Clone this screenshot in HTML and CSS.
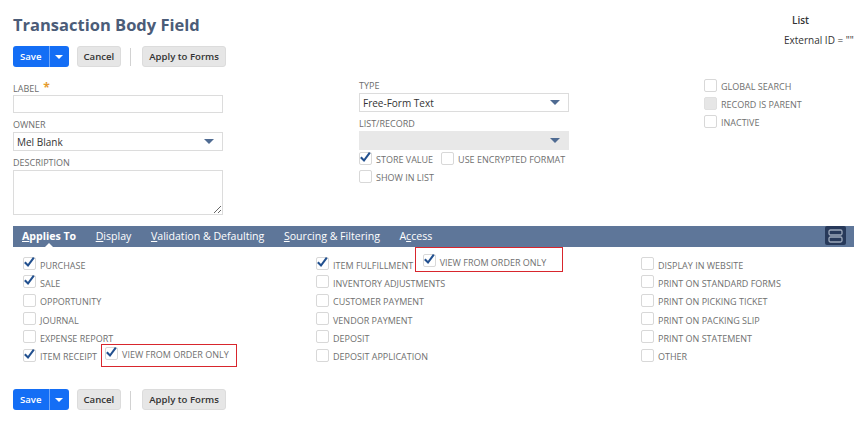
FILE: index.html
```html
<!DOCTYPE html>
<html>
<head>
<meta charset="utf-8">
<title>Transaction Body Field</title>
<link rel="stylesheet" href="styles.css">
</head>
<body>
<div class="page">
  <header class="head">
    <div class="head-main">
      <h1 class="title">Transaction Body Field</h1>
      <div class="actions">
        <div class="split">
          <button class="btn-save">Save</button>
          <button class="btn-drop"><svg width="8" height="4" viewBox="0 0 8 4"><path d="M0 0h8L4 4z" fill="#fff"/></svg></button>
        </div>
        <button class="btn">Cancel</button>
        <span class="sep"></span>
        <button class="btn btn-after-sep">Apply to Forms</button>
      </div>
    </div>
    <div class="head-side">
      <div class="side-list">List</div>
      <div class="side-ext">External ID = ""</div>
    </div>
  </header>

  <section class="form">
    <div class="col col-a">
      <div class="field">
        <div class="flabel">LABEL <span class="req">*</span></div>
        <div class="inp"></div>
      </div>
      <div class="field">
        <div class="flabel">OWNER</div>
        <div class="inp sel"><span>Mel Blank</span><svg class="caret" viewBox="0 0 10 5"><path d="M0 0h10L5 5z"/></svg></div>
      </div>
      <div class="field">
        <div class="flabel">DESCRIPTION</div>
        <textarea class="ta"></textarea>
      </div>
    </div>

    <div class="col col-b">
      <div class="field">
        <div class="flabel">TYPE</div>
        <div class="inp sel"><span>Free-Form Text</span><svg class="caret" viewBox="0 0 10 5"><path d="M0 0h10L5 5z"/></svg></div>
      </div>
      <div class="field">
        <div class="flabel">LIST/RECORD</div>
        <div class="inp sel sel-off"><span></span><svg class="caret" viewBox="0 0 10 5"><path d="M0 0h10L5 5z"/></svg></div>
      </div>
      <div class="checks-b">
        <div class="chk">
          <svg class="cb" viewBox="0 0 13 13"><rect x=".5" y=".5" width="12" height="12" rx="1.5"/><path d="M1.8 5.2L5 8.5L10.8 .6"/></svg>
          <span class="chk-label">STORE VALUE</span>
          <svg class="cb cb-next" viewBox="0 0 13 13"><rect x=".5" y=".5" width="12" height="12" rx="1.5"/></svg>
          <span class="chk-label">USE ENCRYPTED FORMAT</span>
        </div>
        <div class="chk">
          <svg class="cb" viewBox="0 0 13 13"><rect x=".5" y=".5" width="12" height="12" rx="1.5"/></svg>
          <span class="chk-label">SHOW IN LIST</span>
        </div>
      </div>
    </div>

    <div class="col col-c">
      <div class="chk">
        <svg class="cb" viewBox="0 0 13 13"><rect x=".5" y=".5" width="12" height="12" rx="1.5"/></svg>
        <span class="chk-label">GLOBAL SEARCH</span>
      </div>
      <div class="chk">
        <svg class="cb cb-off" viewBox="0 0 13 13"><rect x=".5" y=".5" width="12" height="12" rx="1.5"/></svg>
        <span class="chk-label">RECORD IS PARENT</span>
      </div>
      <div class="chk">
        <svg class="cb" viewBox="0 0 13 13"><rect x=".5" y=".5" width="12" height="12" rx="1.5"/></svg>
        <span class="chk-label">INACTIVE</span>
      </div>
    </div>
  </section>

  <nav class="tabs">
    <span class="tab active"><u>A</u>pplies To</span>
    <span class="tab"><u>D</u>isplay</span>
    <span class="tab"><u>V</u>alidation &amp; Defaulting</span>
    <span class="tab"><u>S</u>ourcing &amp; Filtering</span>
    <span class="tab">A<u>c</u>cess</span>
    <span class="tab-icon"><svg width="15" height="14" viewBox="0 0 15 14"><rect x="1" y="1" width="13" height="5" rx="1.5"/><rect x="1" y="8" width="13" height="5" rx="1.5"/></svg></span>
  </nav>

  <section class="applies">
    <div class="acol">
      <div class="chk">
        <svg class="cb" viewBox="0 0 13 13"><rect x=".5" y=".5" width="12" height="12" rx="1.5"/><path d="M1.8 5.2L5 8.5L10.8 .6"/></svg>
        <span class="chk-label">PURCHASE</span>
      </div>
      <div class="chk">
        <svg class="cb" viewBox="0 0 13 13"><rect x=".5" y=".5" width="12" height="12" rx="1.5"/><path d="M1.8 5.2L5 8.5L10.8 .6"/></svg>
        <span class="chk-label">SALE</span>
      </div>
      <div class="chk">
        <svg class="cb" viewBox="0 0 13 13"><rect x=".5" y=".5" width="12" height="12" rx="1.5"/></svg>
        <span class="chk-label">OPPORTUNITY</span>
      </div>
      <div class="chk">
        <svg class="cb" viewBox="0 0 13 13"><rect x=".5" y=".5" width="12" height="12" rx="1.5"/></svg>
        <span class="chk-label">JOURNAL</span>
      </div>
      <div class="chk">
        <svg class="cb" viewBox="0 0 13 13"><rect x=".5" y=".5" width="12" height="12" rx="1.5"/></svg>
        <span class="chk-label">EXPENSE REPORT</span>
      </div>
      <div class="chk">
        <svg class="cb" viewBox="0 0 13 13"><rect x=".5" y=".5" width="12" height="12" rx="1.5"/><path d="M1.8 5.2L5 8.5L10.8 .6"/></svg>
        <span class="chk-label">ITEM RECEIPT</span>
        <span class="note note-a">
          <svg class="cb" viewBox="0 0 13 13"><rect x=".5" y=".5" width="12" height="12" rx="1.5"/><path d="M1.8 5.2L5 8.5L10.8 .6"/></svg>
          <span class="chk-label">VIEW FROM ORDER ONLY</span>
        </span>
      </div>
    </div>

    <div class="acol">
      <div class="chk">
        <svg class="cb" viewBox="0 0 13 13"><rect x=".5" y=".5" width="12" height="12" rx="1.5"/><path d="M1.8 5.2L5 8.5L10.8 .6"/></svg>
        <span class="chk-label">ITEM FULFILLMENT</span>
        <span class="note note-b">
          <svg class="cb" viewBox="0 0 13 13"><rect x=".5" y=".5" width="12" height="12" rx="1.5"/><path d="M1.8 5.2L5 8.5L10.8 .6"/></svg>
          <span class="chk-label">VIEW FROM ORDER ONLY</span>
        </span>
      </div>
      <div class="chk">
        <svg class="cb" viewBox="0 0 13 13"><rect x=".5" y=".5" width="12" height="12" rx="1.5"/></svg>
        <span class="chk-label">INVENTORY ADJUSTMENTS</span>
      </div>
      <div class="chk">
        <svg class="cb" viewBox="0 0 13 13"><rect x=".5" y=".5" width="12" height="12" rx="1.5"/></svg>
        <span class="chk-label">CUSTOMER PAYMENT</span>
      </div>
      <div class="chk">
        <svg class="cb" viewBox="0 0 13 13"><rect x=".5" y=".5" width="12" height="12" rx="1.5"/></svg>
        <span class="chk-label">VENDOR PAYMENT</span>
      </div>
      <div class="chk">
        <svg class="cb" viewBox="0 0 13 13"><rect x=".5" y=".5" width="12" height="12" rx="1.5"/></svg>
        <span class="chk-label">DEPOSIT</span>
      </div>
      <div class="chk">
        <svg class="cb" viewBox="0 0 13 13"><rect x=".5" y=".5" width="12" height="12" rx="1.5"/></svg>
        <span class="chk-label">DEPOSIT APPLICATION</span>
      </div>
    </div>

    <div class="acol">
      <div class="chk">
        <svg class="cb" viewBox="0 0 13 13"><rect x=".5" y=".5" width="12" height="12" rx="1.5"/></svg>
        <span class="chk-label">DISPLAY IN WEBSITE</span>
      </div>
      <div class="chk">
        <svg class="cb" viewBox="0 0 13 13"><rect x=".5" y=".5" width="12" height="12" rx="1.5"/></svg>
        <span class="chk-label">PRINT ON STANDARD FORMS</span>
      </div>
      <div class="chk">
        <svg class="cb" viewBox="0 0 13 13"><rect x=".5" y=".5" width="12" height="12" rx="1.5"/></svg>
        <span class="chk-label">PRINT ON PICKING TICKET</span>
      </div>
      <div class="chk">
        <svg class="cb" viewBox="0 0 13 13"><rect x=".5" y=".5" width="12" height="12" rx="1.5"/></svg>
        <span class="chk-label">PRINT ON PACKING SLIP</span>
      </div>
      <div class="chk">
        <svg class="cb" viewBox="0 0 13 13"><rect x=".5" y=".5" width="12" height="12" rx="1.5"/></svg>
        <span class="chk-label">PRINT ON STATEMENT</span>
      </div>
      <div class="chk">
        <svg class="cb" viewBox="0 0 13 13"><rect x=".5" y=".5" width="12" height="12" rx="1.5"/></svg>
        <span class="chk-label">OTHER</span>
      </div>
    </div>
  </section>

  <div class="actions actions-bottom">
    <div class="split">
      <button class="btn-save">Save</button>
      <button class="btn-drop"><svg width="8" height="4" viewBox="0 0 8 4"><path d="M0 0h8L4 4z" fill="#fff"/></svg></button>
    </div>
    <button class="btn">Cancel</button>
    <span class="sep"></span>
    <button class="btn btn-after-sep">Apply to Forms</button>
  </div>
</div>
</body>
</html>
```

FILE: styles.css
```css
* { box-sizing: border-box; }

html, body {
  margin: 0;
  overflow: hidden;
  background: #fff;
}

body {
  font-family: "Open Sans", "Liberation Sans", sans-serif;
  color: #333;
}

.page {
  width: 854px;
  padding-left: 13px;
}

/* header */
.head {
  display: flex;
  align-items: flex-start;
}

.head-main { flex: 1; }

.title {
  margin: 13px 0 0;
  font-size: 16.5px;
  line-height: 24px;
  font-weight: 700;
  color: #4b5c78;
}

.head-side {
  width: 70px;
  margin-top: 10px;
  font-size: 10px;
  line-height: 20px;
  white-space: nowrap;
  color: #333;
}

.side-list {
  padding-left: 8px;
  font-weight: 600;
}

/* buttons */
.actions {
  display: flex;
  align-items: center;
  height: 21px;
  margin-top: 9px;
}

.split {
  display: flex;
  height: 21px;
  border-radius: 3px;
  background: #146ef5;
  overflow: hidden;
}

.btn-save,
.btn-drop,
.btn {
  font-family: inherit;
  margin: 0;
  cursor: pointer;
}

.btn-save {
  border: 0;
  border-right: 1px solid rgba(255, 255, 255, 0.4);
  background: transparent;
  color: #fff;
  font-size: 9.6px;
  font-weight: 600;
  padding: 0 7px;
  height: 21px;
}

.btn-drop {
  border: 0;
  background: transparent;
  width: 19px;
  height: 21px;
  padding: 0;
  display: flex;
  align-items: center;
  justify-content: center;
}

.btn {
  height: 21px;
  margin-left: 8px;
  padding: 0 6px;
  border: 1px solid #dcdcdc;
  border-radius: 3px;
  background: #e6e6e6;
  color: #333;
  font-size: 9.6px;
  font-weight: 600;
}

.btn-after-sep { margin-left: 0; }

.sep {
  width: 1px;
  height: 18px;
  background: #d2d2d2;
  margin: 0 11px 0 9px;
}

.actions-bottom {
  margin-top: 23px;
}

.actions-bottom .sep {
  height: 22px;
  margin-top: 4px;
}

/* form */
.form {
  display: grid;
  grid-template-columns: 346px 345px 1fr;
  margin-top: 11px;
}

.col-a { padding-top: 3px; }
.col-b { padding-top: 1px; }

.field + .field { margin-top: 5px; }

.flabel {
  height: 14px;
  font-size: 9px;
  line-height: 14px;
  color: #6d6d6d;
}

.req {
  color: #e59b2e;
  font-size: 12px;
  font-weight: 700;
  margin-left: 2px;
}

.inp {
  width: 210px;
  height: 18px;
  display: flex;
  align-items: center;
  padding: 0 3px;
  border: 1px solid #dcdcdc;
  background: #fff;
  font-size: 10px;
  color: #333;
}

.sel { height: 19px; }

.sel-off {
  background: #e8e8e8;
  border-color: #e8e8e8;
}

.caret {
  width: 10px;
  height: 5px;
  margin-left: auto;
  margin-right: 5px;
  fill: #4f6b92;
}

.ta {
  display: block;
  width: 210px;
  height: 45px;
  margin: 0;
  border: 1px solid #dcdcdc;
  font-family: inherit;
  resize: vertical;
}

.checks-b { margin-top: 1px; }

/* checkboxes */
.chk {
  display: flex;
  align-items: center;
  height: 18px;
}

.cb {
  width: 13px;
  height: 13px;
  flex: none;
  overflow: visible;
  margin-bottom: 4px;
}

.cb rect {
  fill: #fff;
  stroke: #d8d8d8;
}

.cb path {
  fill: none;
  stroke: #22508f;
  stroke-width: 2.1;
  stroke-linejoin: miter;
}

.cb-off rect {
  fill: #e6e6e6;
  stroke: #e0e0e0;
}

.cb-next { margin-left: 8px; }

.chk-label {
  margin-left: 4px;
  font-size: 9px;
  line-height: 14px;
  color: #707070;
  white-space: nowrap;
}

/* tabs */
.tabs {
  display: flex;
  align-items: center;
  height: 21px;
  margin-top: 11px;
  padding-left: 9px;
  background: #5e7699;
  color: #fff;
  font-size: 10.6px;
}

.tab {
  position: relative;
  margin-right: 19.5px;
  line-height: 21px;
  white-space: nowrap;
}

.tab u { text-underline-offset: 1px; }

.tab.active { font-weight: 700; }

.tab.active::after {
  content: "";
  position: absolute;
  left: 50%;
  bottom: 0;
  margin-left: -4px;
  border-left: 4px solid transparent;
  border-right: 4px solid transparent;
  border-bottom: 4px solid #fff;
}

.tab-icon {
  align-self: flex-start;
  margin-left: auto;
  margin-right: 8px;
  width: 21px;
  height: 19px;
  border-radius: 2px;
  background: #27395a;
  display: flex;
  align-items: center;
  justify-content: center;
}

.tab-icon rect {
  fill: none;
  stroke: #9ca8bb;
  stroke-width: 1.3;
}

/* applies to */
.applies {
  display: grid;
  grid-template-columns: 293px 325px 1fr;
  padding-left: 10px;
  margin-top: 9.5px;
}

.applies .chk { height: 18.3px; }

.note {
  display: flex;
  align-items: center;
  align-self: flex-start;
  border: 1.5px solid #d8262d;
}

.note-a {
  margin: -4px 0 0 4px;
  padding: 2px 7px 2px 3px;
}

.note-b {
  margin: -10px 0 0 1.5px;
  padding: 6.5px 16px 0 7px;
}
```
